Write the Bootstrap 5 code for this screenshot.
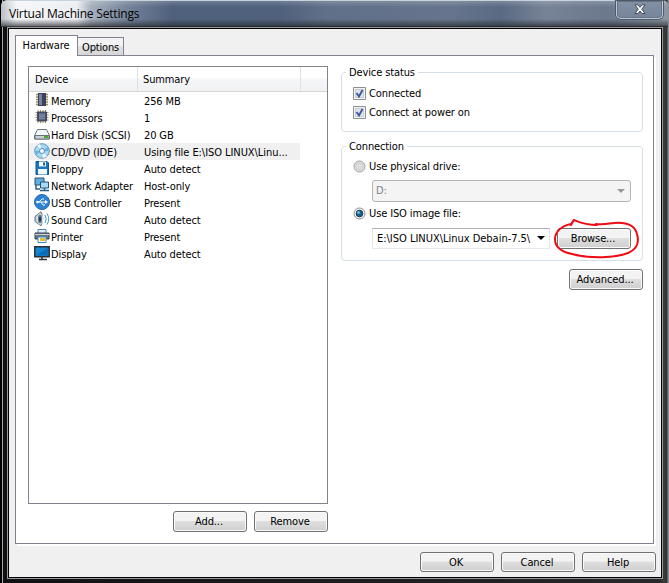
<!DOCTYPE html>
<html lang="en">
<head>
<meta charset="utf-8">
<title>Virtual Machine Settings</title>
<link href="https://cdn.jsdelivr.net/npm/bootstrap@5.3.0/dist/css/bootstrap.min.css" rel="stylesheet">
<style>
body{width:669px;height:583px;overflow:hidden;background:#08080a;font:11px/17px "DejaVu Sans Condensed","DejaVu Sans",sans-serif;font-stretch:condensed;letter-spacing:-.12px;color:#000}
.vm-window{width:669px;height:583px;padding:0 7px 4px 7px;background:linear-gradient(90deg,#000 0 2px,#a5a8aa 2px 3px,#101012 3px 7px,#28282a 660px,#3c3c3c 663px,#333 667px,#8b9096 668px)}
.titlebar{height:27px;margin:0 -6px 0 -6px;padding-left:8px;border-top:1px solid #c7d3dc;border-radius:6px 6px 0 0;
background:linear-gradient(180deg,#ffffff30 0,#fff0 6px,#fff0 18px,#26292daa 25px,#141414 26px),linear-gradient(90deg,#b9bec6 0,#f5f6f7 16px,#eceef1 76px,#a6afbd 90px,#76849a 125px,#50617d 170px,#50617d 280px,#607089 325px,#66758c 450px,#596a83 500px,#778397 545px,#6b788d 605px,#8d97a4 668px)}
.titlebar h1{font:12px/26px "Open Sans","Noto Sans",sans-serif;letter-spacing:-.19px;margin:0;color:#000}
.close-box{width:47px;height:18px;margin-right:5px;border:1px solid #c0cad5;border-top:0;border-radius:0 0 5px 5px;box-shadow:0 0 0 1px #4d596b,inset 0 0 0 1px #657387;background:linear-gradient(#8390a4,#77859a)}
.client{height:550px;border:1px solid #000;outline:1px solid #999;outline-offset:0;background:#f0f0f0;padding:6px 5px 0 6px;margin:1px 0 0 1px}
.tabs{height:20px}
.tab-on{width:63px;height:21px;border:1px solid #82828f;border-bottom:0;background:#fff;line-height:20px;text-align:center;position:relative;z-index:1;padding-right:1px}
.tab-off{width:46px;height:18px;margin-top:2px;border:1px solid #82828f;border-left:0;border-bottom:0;background:linear-gradient(#f3f3f3 50%,#e2e2e2 50%,#d6d6d6);line-height:20px;text-align:center;letter-spacing:-.18px}
.panel{width:639px;height:489px;border:1px solid #82828f;background:#fff;box-shadow:2px 2px #fff;padding:10px 10px 0 12px}
.devices{width:300px;height:438px;border:1px solid #82828f}
.heads{height:25px;border-bottom:1px solid #d5d5d5;background:linear-gradient(#fff 45%,#f5f6f8 50%,#f0f1f3);line-height:26px}
.heads div{border-right:1px solid #dfe1e4;padding-left:6px}
.h1c{width:109px}.h2c{width:163px;padding-left:5px!important}
.dev{width:271px;height:17px;line-height:19px;padding-left:5px}
.dev.sel{background:#f0f0f0}
.dev svg{width:16px;height:16px;flex:none}
.dev .nm{width:94px;padding-left:1px;white-space:nowrap}
.nm+span{position:relative}
.wbtn{width:74px;height:21px;padding:0 2px 0 0;border:1px solid #707070;border-radius:3px;background:linear-gradient(#f3f3f3 0 45%,#dedede 50%,#cfcfcf);box-shadow:inset 0 0 0 1px #fbfbfb;font:inherit;line-height:17px;letter-spacing:inherit;color:#000}
.group{width:302px;border:1px solid #d5dfe5;border-radius:4px;padding:0 11px}
.group>legend{float:none;width:max-content;font-size:11px;line-height:17px;height:16px;margin:0 0 0 -7px;padding:0 3px;background:#fff}
.opt{gap:2px;line-height:19px;height:19px}
.opt svg{flex:none;width:14px;height:14px}
.drive{height:22px;margin-left:19px;border:1px solid #b5b5b5;border-radius:3px;line-height:20px}
.drive-off{width:259px;background:#f4f4f4;color:#838383;padding:0 4px 0 3px}
.iso{width:178px;height:21px;border-color:#abadb3 #e2e3ea #e3e9ef #e2e3ea;border-radius:0;padding:0 4px 0 4px;line-height:19px;white-space:nowrap}
.status-box{height:68px;margin-top:-2px}
.link-box{height:123px;margin-top:6px}
.ring{position:absolute;left:550px;top:216px;pointer-events:none}
</style>
</head>
<body>
<div class="vm-window">
 <div class="titlebar d-flex justify-content-between align-items-start">
  <h1>Virtual Machine Settings</h1>
  <div class="close-box d-flex justify-content-center align-items-center"><svg width="12" height="11" viewBox="0 0 12 11"><path d="M1 .8h3l2 2.500L8 .8h3L7.800 5.200 11 9.500H8L6 7 4 9.500H1l3.200-4.300z" fill="#fff" stroke="#40495a"/></svg></div>
 </div>
 <div class="client">
  <div class="tabs d-flex"><div class="tab-on">Hardware</div><div class="tab-off">Options</div></div>
  <div class="panel d-flex justify-content-between align-items-start">
   <div>
    <div class="devices">
     <div class="heads d-flex"><div class="h1c">Device</div><div class="h2c">Summary</div></div>
     <div class="dev d-flex"><svg viewBox="0 0 16 16"><path d="M2 2.500h12M2 5h12M2 7.500h12M2 10h12M2 12.500h12" stroke="#9c8a4e" stroke-width="1.300"/><rect x="4" y="1" width="8" height="13" fill="#39425e"/><rect x="5" y="2" width="3" height="11" fill="#7681a6"/></svg><span class="nm">Memory</span><span>256 MB</span></div>
     <div class="dev d-flex"><svg viewBox="0 0 16 16"><path d="M4 1v13M6.500 1v13M9 1v13M11.500 1v13M1.500 3.500h13M1.500 6h13M1.500 8.500h13M1.500 11h13" stroke="#a08c50"/><rect x="3" y="2.500" width="10" height="10" rx="1" fill="#454c68"/><path d="M5 4.500h6v6H5z" fill="#747d9b"/></svg><span class="nm">Processors</span><span>1</span></div>
     <div class="dev d-flex"><svg viewBox="0 0 16 16"><path d="M3.500 3.500h9l3 6v3.500h-15V9.500z" fill="#f5f7f8" stroke="#68747d"/><path d="M1 9.500h14V13H1z" fill="#c9d0d4" stroke="#68747d"/><path d="M10 11h4" stroke="#4aaa38" stroke-width="2"/></svg><span class="nm">Hard Disk (SCSI)</span><span>20 GB</span></div>
     <div class="dev sel d-flex"><svg viewBox="0 0 16 16"><circle cx="8" cy="8" r="7.300" fill="#a7d7f4" stroke="#6497bb"/><path d="M8 8 3 2.500 6 1zM8 8l5 5.500-4 1.500z" fill="#eefaff"/><path d="M8 8l6-4 1 4zM8 8l-6 4-1-4z" fill="#65b4e8"/><circle cx="8" cy="8" r="2.500" fill="#fff" stroke="#5089b3"/></svg><span class="nm">CD/DVD (IDE)</span><span style="letter-spacing:-.06px">Using file E:\ISO LINUX\Linu...</span></div>
     <div class="dev d-flex"><svg viewBox="0 0 16 16"><path d="M2 1.500h11l1.500 1.500v11.500H2z" fill="#1976bd" stroke="#0d5798"/><path d="M5 1.500h7v5H5z" fill="#f5faff"/><path d="M9 2.500h2v3H9z" fill="#176ab0"/><path d="M4 9h9v5.500H4z" fill="#eef8ff"/></svg><span class="nm">Floppy</span><span>Auto detect</span></div>
     <div class="dev d-flex"><svg viewBox="0 0 16 16"><path d="M1 1h9v7H1z" fill="#61aee0" stroke="#244f71"/><path d="M6.500 5h8v6h-8z" fill="#a6d9f5" stroke="#1f527b"/><path d="M10.500 11v2M6 13.500h9M2 8v4h4" fill="none" stroke="#28618e" stroke-width="1.500"/></svg><span class="nm">Network Adapter</span><span>Host-only</span></div>
     <div class="dev d-flex"><svg viewBox="0 0 16 16"><circle cx="8" cy="8" r="7.500" fill="#2d83d2" stroke="#2067ab"/><path d="M3 8h9M5 8l3-3h2M7 8l2 3h2" fill="none" stroke="#fff"/><circle cx="3.500" cy="8" r="1.300" fill="#fff"/><path d="m11 6 3 2-3 2z" fill="#fff"/></svg><span class="nm">USB Controller</span><span>Present</span></div>
     <div class="dev d-flex"><svg viewBox="0 0 16 16"><path d="M1 5.500 7 .8q3.500 6.700 0 14L1 10.500z" fill="#c3cbd2" stroke="#647482"/><ellipse cx="6" cy="8" rx="2.600" ry="5" fill="#607d94" stroke="#e7edf1"/><ellipse cx="6" cy="8" rx="1" ry="2.500" fill="#15344c"/><path d="M11 4q2.500 4 0 8M13 2.500q3.500 5.500 0 11" fill="none" stroke="#469bd1"/></svg><span class="nm">Sound Card</span><span>Auto detect</span></div>
     <div class="dev d-flex"><svg viewBox="0 0 16 16"><path d="M4 1.500h8V6H4z" fill="#dceefa" stroke="#4d85ac"/><path d="M1 5h14v6H1z" fill="#6c7784" stroke="#36444f"/><path d="M1 6.500h14" stroke="#cbd3da"/><path d="M4 9h8v5.500H4z" fill="#fff" stroke="#3789bd"/><path d="M6 10h5v3H6z" fill="#e9bd27"/></svg><span class="nm">Printer</span><span>Present</span></div>
     <div class="dev d-flex"><svg viewBox="0 0 16 16"><path d="M.8 1.800h14.400v10H.8z" fill="#1684cf" stroke="#263039" stroke-width="1.500"/><path d="M2 10.500 14 3v7.500z" fill="#0b6db9"/><path d="M5 14.500h8M8 12v2" stroke="#303538" stroke-width="1.500"/></svg><span class="nm">Display</span><span>Auto detect</span></div>
    </div>
    <div class="d-flex justify-content-end" style="margin-top:7px;gap:7px"><button class="wbtn">Add...</button><button class="wbtn">Remove</button></div>
   </div>
   <div class="d-flex flex-column">
    <fieldset class="group status-box"><legend>Device status</legend>
     <div class="opt d-flex align-items-center" style="margin-top:4px"><svg viewBox="0 0 14 14"><path d="M.5.5h12v12H.5z" fill="#f5f5f5" stroke="#8e8f8f"/><path d="M2.500 2.500h8v8h-8z" fill="#e2e5e9" stroke="#c5cad0"/><path d="m3.500 6 2.500 3.500L9.500 3" fill="none" stroke="#3c58a0" stroke-width="1.900"/></svg>Connected</div>
     <div class="opt d-flex align-items-center"><svg viewBox="0 0 14 14"><path d="M.5.5h12v12H.5z" fill="#f5f5f5" stroke="#8e8f8f"/><path d="M2.500 2.500h8v8h-8z" fill="#e2e5e9" stroke="#c5cad0"/><path d="m3.500 6 2.500 3.500L9.500 3" fill="none" stroke="#3c58a0" stroke-width="1.900"/></svg>Connect at power on</div>
    </fieldset>
    <fieldset class="group link-box"><legend>Connection</legend>
     <div class="opt d-flex align-items-center" style="margin-top:3px"><svg viewBox="0 0 14 14"><circle cx="6.500" cy="6.500" r="5.500" fill="#eee" stroke="#9a9a9a"/><circle cx="6.500" cy="6.500" r="3.800" fill="#ddd" stroke="#c8c8c8"/></svg>Use physical drive:</div>
     <div class="drive drive-off d-flex justify-content-between align-items-center" style="margin-top:4px">D:<svg width="9" height="5"><path d="M0 0h8L4 4z" fill="#999"/></svg></div>
     <div class="opt d-flex align-items-center" style="margin-top:2px"><svg viewBox="0 0 14 14"><circle cx="6.500" cy="6.500" r="5.500" fill="#f4f4f4" stroke="#8a8d91"/><circle cx="6.500" cy="6.500" r="3.300" fill="#1b638e" stroke="#17364d"/><circle cx="5.500" cy="5.500" r="1.300" fill="#81d0ef"/></svg>Use ISO image file:</div>
     <div class="d-flex" style="gap:7px;margin-top:5px"><div class="drive iso d-flex justify-content-between align-items-center"><span style="letter-spacing:-.02px">E:\ISO LINUX\Linux Debain-7.5\</span><svg width="8" height="5"><path d="M0 0h8L4 4z"/></svg></div><button class="wbtn">Browse...</button></div>
    </fieldset>
    <button class="wbtn align-self-end" style="margin-top:8px">Advanced...</button>
   </div>
  </div>
  <div class="d-flex justify-content-end" style="gap:7px;margin-top:8px"><button class="wbtn" style="height:20px">OK</button><button class="wbtn" style="height:20px">Cancel</button><button class="wbtn" style="height:20px">Help</button></div>
 </div>
</div>
<svg class="ring" width="92" height="48"><path d="M47 9C35 9 29 6 24 4L21 8C11 10 5 16 5 23c0 9 7 13 17 15 19 5 43 4 56-1 10-4 11-12 9-19-2-8-10-12-23-11-7 1-12 2-18 1M21 9l3-5" fill="none" stroke="#f00a12" stroke-width="2" stroke-linecap="round"/></svg>
<script src="https://cdn.jsdelivr.net/npm/bootstrap@5.3.0/dist/js/bootstrap.bundle.min.js"></script>
</body>
</html>
